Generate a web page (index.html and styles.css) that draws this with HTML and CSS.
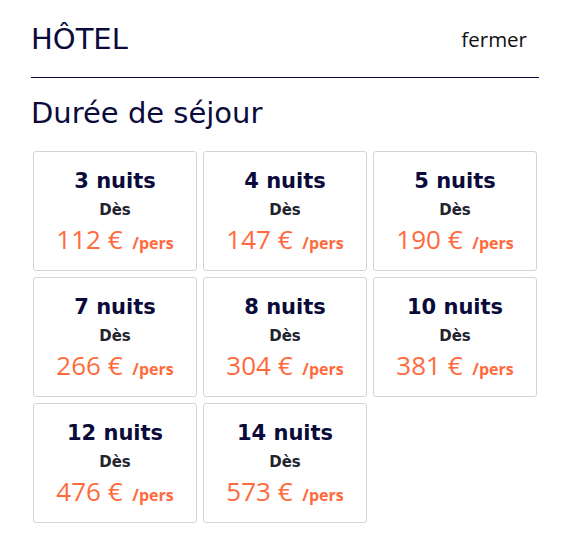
FILE: index.html
```html
<!DOCTYPE html>
<html lang="fr">
<head>
<meta charset="utf-8">
<link rel="stylesheet" href="styles.css">
</head>
<body>
<div class="panel">
  <header class="top">
    <h1 class="title">HÔTEL</h1>
    <span class="close">fermer</span>
  </header>
  <h2 class="subtitle">Durée de séjour</h2>
  <div class="grid">
    <div class="card"><div class="nights">3 nuits</div><div class="from">Dès</div><div class="price">112 € <small>/pers</small></div></div>
    <div class="card"><div class="nights">4 nuits</div><div class="from">Dès</div><div class="price">147 € <small>/pers</small></div></div>
    <div class="card"><div class="nights">5 nuits</div><div class="from">Dès</div><div class="price">190 € <small>/pers</small></div></div>
    <div class="card"><div class="nights">7 nuits</div><div class="from">Dès</div><div class="price">266 € <small>/pers</small></div></div>
    <div class="card"><div class="nights">8 nuits</div><div class="from">Dès</div><div class="price">304 € <small>/pers</small></div></div>
    <div class="card"><div class="nights">10 nuits</div><div class="from">Dès</div><div class="price">381 € <small>/pers</small></div></div>
    <div class="card"><div class="nights">12 nuits</div><div class="from">Dès</div><div class="price">476 € <small>/pers</small></div></div>
    <div class="card"><div class="nights">14 nuits</div><div class="from">Dès</div><div class="price">573 € <small>/pers</small></div></div>
  </div>
</div>
</body>
</html>
```
FILE: styles.css
```css
html, body { margin: 0; padding: 0; background: #fff; }
body { font-family: "DejaVu Sans", sans-serif; color: #0b0b3b; }
.panel { width: 508px; padding: 0 31px; }
.top {
  display: flex; justify-content: space-between; align-items: flex-start;
  height: 78px; border-bottom: 1px solid #0b0b3b; box-sizing: border-box;
}
.title { margin: 22px 0 0; font-size: 29px; font-weight: 400; line-height: 34px; }
.close { font-family: "Open Sans", sans-serif; font-size: 20.5px; line-height: 28px; color: #111; margin: 25px 12px 0 0; }
.subtitle { margin: 18px 0 21px; font-size: 29px; font-weight: 400; line-height: 34px; }
.grid {
  display: grid; grid-template-columns: repeat(3, 164px); gap: 6px;
  padding-left: 2px;
}
.card {
  height: 120px; box-sizing: border-box; border: 1px solid #d4d4d4; border-radius: 3px;
  display: flex; flex-direction: column; align-items: center; padding-top: 16px;
}
.nights { font-size: 21px; font-weight: 700; line-height: 26px; color: #0b0b3b; }
.from { font-size: 15px; font-weight: 700; line-height: 18px; margin-top: 7px; color: #23232e; }
.price { font-family: "Open Sans", sans-serif; font-size: 26px; color: #ff6a3c; line-height: 30px; margin-top: 5px; }
.price small { font-size: 16px; font-weight: 700; margin-left: 3px; }
```
